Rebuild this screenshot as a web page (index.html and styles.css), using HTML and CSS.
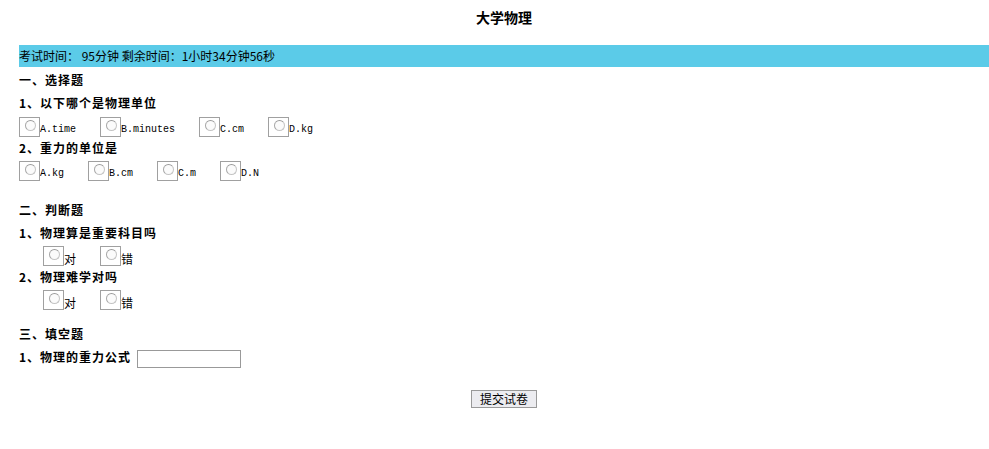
FILE: index.html
```html
<!DOCTYPE html>
<html lang="zh">
<head>
<meta charset="utf-8">
<title>大学物理</title>
<link rel="stylesheet" href="styles.css">
</head>
<body>
<div class="page">
  <div class="title">大学物理</div>
  <div class="bar">考试时间： 95分钟 剩余时间：1小时34分钟56秒</div>

  <div class="section">一、选择题</div>
  <div class="question">1、以下哪个是物理单位</div>
  <div class="options first">
    <label class="opt"><span class="radio"><span class="dot"></span></span><span class="lbl mono">A.time</span></label>
    <label class="opt"><span class="radio"><span class="dot"></span></span><span class="lbl mono">B.minutes</span></label>
    <label class="opt"><span class="radio"><span class="dot"></span></span><span class="lbl mono">C.cm</span></label>
    <label class="opt"><span class="radio"><span class="dot"></span></span><span class="lbl mono">D.kg</span></label>
  </div>
  <div class="question">2、重力的单位是</div>
  <div class="options">
    <label class="opt"><span class="radio"><span class="dot"></span></span><span class="lbl mono">A.kg</span></label>
    <label class="opt"><span class="radio"><span class="dot"></span></span><span class="lbl mono">B.cm</span></label>
    <label class="opt"><span class="radio"><span class="dot"></span></span><span class="lbl mono">C.m</span></label>
    <label class="opt"><span class="radio"><span class="dot"></span></span><span class="lbl mono">D.N</span></label>
  </div>

  <div class="section gap-top">二、判断题</div>
  <div class="question">1、物理算是重要科目吗</div>
  <div class="options indent">
    <label class="opt"><span class="radio"><span class="dot"></span></span><span class="lbl cjk">对</span></label>
    <label class="opt"><span class="radio"><span class="dot"></span></span><span class="lbl cjk">错</span></label>
  </div>
  <div class="question">2、物理难学对吗</div>
  <div class="options indent">
    <label class="opt"><span class="radio"><span class="dot"></span></span><span class="lbl cjk">对</span></label>
    <label class="opt"><span class="radio"><span class="dot"></span></span><span class="lbl cjk">错</span></label>
  </div>

  <div class="section gap-top2">三、填空题</div>
  <div class="question fill">1、物理的重力公式 <input class="blank" type="text"></div>

  <div class="submit-row"><button class="submit" type="button">提交试卷</button></div>
</div>
</body>
</html>
```

FILE: styles.css
```css
html, body {
  margin: 0;
  padding: 0;
  background: #ffffff;
}
body {
  font-family: "Noto Sans CJK SC", "DejaVu Sans", sans-serif;
  font-size: 12px;
  color: #000;
}
.page {
  padding-left: 19px;
}
.title {
  margin-top: 8px;
  height: 20px;
  line-height: 19px;
  text-align: center;
  font-weight: bold;
  font-size: 14px;
}
.bar {
  margin-top: 17px;
  height: 22px;
  line-height: 21px;
  background: #5bcbe8;
  font-size: 12px;
  white-space: pre;
}
.section, .question {
  height: 21px;
  line-height: 21px;
  padding-bottom: 2px;
  font-weight: bold;
  letter-spacing: 1px;
}
.section {
  margin-top: 2px;
}
.gap-top {
  margin-top: 18px;
}
.gap-top2 {
  margin-top: 13px;
}
.options {
  display: flex;
  align-items: flex-end;
  height: 20px;
  margin-top: 1px;
}
.options.first {
  margin-top: 2px;
}
.indent {
  padding-left: 24px;
}
.opt {
  display: flex;
  align-items: flex-end;
  margin-right: 24px;
}
.radio {
  box-sizing: border-box;
  width: 21px;
  height: 20px;
  border: 1px solid #a0a0a0;
  background: #fff;
  position: relative;
}
.dot {
  position: absolute;
  left: 5px;
  top: 2px;
  box-sizing: border-box;
  width: 11px;
  height: 11px;
  border-radius: 50%;
  border: 1px solid #c4c4c4;
  border-top-color: #9a9a9a;
  border-left-color: #a8a8a8;
  background: #fbfbfb;
}
.lbl {
  line-height: 14px;
  height: 14px;
}
.mono {
  font-family: "Liberation Mono", "DejaVu Sans Mono", monospace;
  font-size: 10px;
}
.cjk {
  font-size: 12px;
  height: 15px;
  line-height: 15px;
}
.fill {
  display: flex;
  align-items: flex-start;
}
.blank {
  box-sizing: border-box;
  width: 104px;
  height: 18px;
  margin: 4px 0 0 6px;
  padding: 0;
  border: 1px solid #999;
  background: #fff;
}
.submit-row {
  margin-top: 21px;
  text-align: center;
}
.submit {
  box-sizing: border-box;
  width: 66px;
  height: 18px;
  padding: 0;
  font-family: "Noto Sans CJK SC", sans-serif;
  font-size: 12px;
  line-height: 16px;
  background: #ececf0;
  border: 1px solid #999;
  color: #000;
}
```
